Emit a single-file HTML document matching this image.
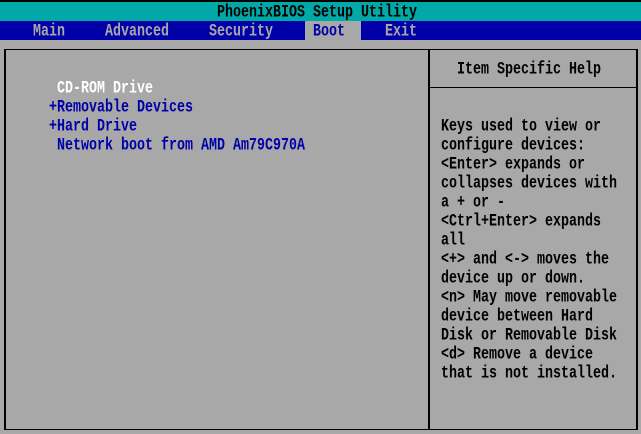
<!DOCTYPE html>
<html>
<head>
<meta charset="utf-8">
<style>
html,body{margin:0;padding:0;background:#a8a8a8;}
#s{position:relative;width:641px;height:434px;overflow:hidden;background:#a8a8a8;font-family:"Liberation Mono",monospace;font-size:13.33px;font-weight:bold;}
#s div{position:absolute;}
.t{white-space:pre;height:19px;line-height:19px;letter-spacing:0;transform-origin:0 13px;transform:translateY(3px) scaleY(1.3);}
.b{color:#0000a8}.w{color:#fff}.g{color:#a8a8a8}.k{color:#000}
.r{background:#000}
</style>
</head>
<body>
<div id="s">
<div style="left:0;top:0;width:641px;height:2px;background:#000"></div>
<div style="left:0;top:2px;width:641px;height:19px;background:#00a8a8"></div>
<div style="left:0;top:21px;width:641px;height:19px;background:#0000a8"></div>
<div style="left:305px;top:21px;width:56px;height:19px;background:#a8a8a8"></div>

<div class="r" style="left:4px;top:49px;width:634px;height:1px"></div>
<div class="r" style="left:4px;top:429px;width:634px;height:1px"></div>
<div class="r" style="left:4px;top:49px;width:2px;height:381px"></div>
<div class="r" style="left:636px;top:49px;width:2px;height:381px"></div>
<div class="r" style="left:428px;top:49px;width:2px;height:381px"></div>
<div class="r" style="left:429px;top:87px;width:208px;height:1px"></div>

<div class="t k" style="left:217px;top:2px">PhoenixBIOS Setup Utility</div>
<div class="t g" style="left:33px;top:21px">Main</div>
<div class="t g" style="left:105px;top:21px">Advanced</div>
<div class="t g" style="left:209px;top:21px">Security</div>
<div class="t b" style="left:313px;top:21px">Boot</div>
<div class="t g" style="left:385px;top:21px">Exit</div>

<div class="t w" style="left:57px;top:78px">CD-ROM Drive</div>
<div class="t b" style="left:49px;top:97px">+Removable Devices</div>
<div class="t b" style="left:49px;top:116px">+Hard Drive</div>
<div class="t b" style="left:57px;top:135px">Network boot from AMD Am79C970A</div>

<div class="t k" style="left:457px;top:59px">Item Specific Help</div>
<div class="t k" style="left:441px;top:116px">Keys used to view or</div>
<div class="t k" style="left:441px;top:135px">configure devices:</div>
<div class="t k" style="left:441px;top:154px">&lt;Enter&gt; expands or</div>
<div class="t k" style="left:441px;top:173px">collapses devices with</div>
<div class="t k" style="left:441px;top:192px">a + or -</div>
<div class="t k" style="left:441px;top:211px">&lt;Ctrl+Enter&gt; expands</div>
<div class="t k" style="left:441px;top:230px">all</div>
<div class="t k" style="left:441px;top:249px">&lt;+&gt; and &lt;-&gt; moves the</div>
<div class="t k" style="left:441px;top:268px">device up or down.</div>
<div class="t k" style="left:441px;top:287px">&lt;n&gt; May move removable</div>
<div class="t k" style="left:441px;top:306px">device between Hard</div>
<div class="t k" style="left:441px;top:325px">Disk or Removable Disk</div>
<div class="t k" style="left:441px;top:344px">&lt;d&gt; Remove a device</div>
<div class="t k" style="left:441px;top:363px">that is not installed.</div>
</div>
</body>
</html>
